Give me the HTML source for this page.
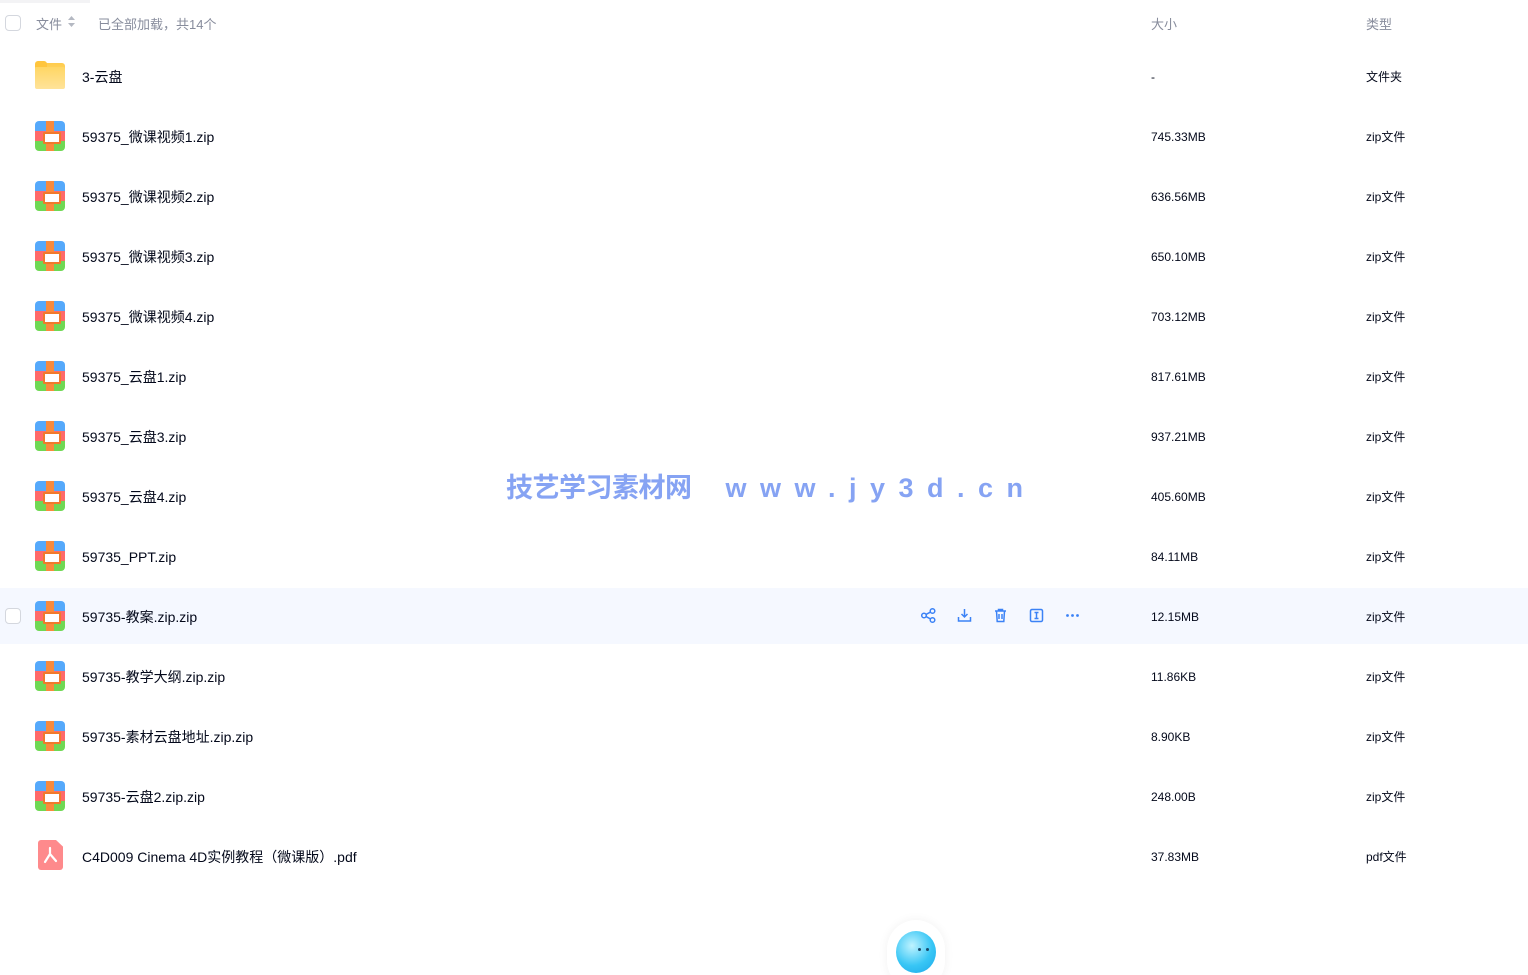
<!DOCTYPE html>
<html><head><meta charset="utf-8"><style>
*{margin:0;padding:0;box-sizing:border-box}
html,body{width:1528px;height:975px;overflow:hidden}
body{background:#fff;font-family:"Liberation Sans","Noto Sans CJK SC",sans-serif;position:relative;color:#03081a}
.hdr{position:absolute;top:0;left:0;width:1528px;height:46px;font-size:13px;color:#878c9c}
.cb{position:absolute;left:5px;width:16px;height:16px;border:1px solid #d4d7de;border-radius:4px;background:#fff}
.row{position:absolute;left:0;width:1528px;height:56px}
.row.hl{background:#f5f8ff}
.ic{position:absolute;left:35px;top:13px;width:30px;height:30px}
.nm{position:absolute;left:82px;top:1px;line-height:56px;font-size:14px}
.sz{position:absolute;left:1151px;top:1px;line-height:56px;font-size:12px}
.tp{position:absolute;left:1366px;top:1px;line-height:56px;font-size:12px}
.zip{border-radius:4px;overflow:hidden;background:linear-gradient(#55a9fb 0 33%,#ff6a6a 33% 66%,#6fd854 66%)}
.zip:before{content:"";position:absolute;left:11px;top:0;width:8px;height:30px;background:#f98a3c}
.zip:after{content:"";position:absolute;left:8px;top:11px;width:14px;height:8px;background:#fff;border:2px solid #f07a2c;border-radius:1px}
.acts{position:absolute;top:19px;left:920px}
.acts svg{position:absolute;top:0}
.wm{position:absolute;top:471px;left:506px;font-size:27px;font-weight:bold;color:#86a3f3;white-space:nowrap;line-height:34px}
</style></head><body>
<div style="position:absolute;left:0;top:0;width:90px;height:3px;background:#f3f3f5"></div>
<div class="hdr">
<div class="cb" style="top:15px"></div>
<span style="position:absolute;left:36px;top:14px">文件</span>
<svg style="position:absolute;left:68px;top:16px" width="7" height="11"><path d="M3.5 0L7 4H0z M3.5 11L7 7H0z" fill="#b4b8c2"/></svg>
<span style="position:absolute;left:98px;top:14px">已全部加载，共14个</span>
<span style="position:absolute;left:1151px;top:14px">大小</span>
<span style="position:absolute;left:1366px;top:14px">类型</span>
</div>

<div class="row" style="top:48px"><div class="ic" style="top:15px;height:26px;border-radius:3px;background:linear-gradient(#ffcc4d,#ffe08a 100%)"><div style="position:absolute;left:0;top:-2px;width:12px;height:6px;background:#ffc53d;border-radius:3px 3px 0 0"></div><div style="position:absolute;left:0;top:4px;width:30px;height:22px;background:linear-gradient(#ffd664,#ffe39a);border-radius:2px"></div></div><div class="nm">3-云盘</div><div class="sz">-</div><div class="tp">文件夹</div></div>

<div class="row" style="top:108px"><div class="ic zip"></div><div class="nm">59375_微课视频1.zip</div><div class="sz">745.33MB</div><div class="tp">zip文件</div></div>
<div class="row" style="top:168px"><div class="ic zip"></div><div class="nm">59375_微课视频2.zip</div><div class="sz">636.56MB</div><div class="tp">zip文件</div></div>
<div class="row" style="top:228px"><div class="ic zip"></div><div class="nm">59375_微课视频3.zip</div><div class="sz">650.10MB</div><div class="tp">zip文件</div></div>
<div class="row" style="top:288px"><div class="ic zip"></div><div class="nm">59375_微课视频4.zip</div><div class="sz">703.12MB</div><div class="tp">zip文件</div></div>
<div class="row" style="top:348px"><div class="ic zip"></div><div class="nm">59375_云盘1.zip</div><div class="sz">817.61MB</div><div class="tp">zip文件</div></div>
<div class="row" style="top:408px"><div class="ic zip"></div><div class="nm">59375_云盘3.zip</div><div class="sz">937.21MB</div><div class="tp">zip文件</div></div>
<div class="row" style="top:468px"><div class="ic zip"></div><div class="nm">59375_云盘4.zip</div><div class="sz">405.60MB</div><div class="tp">zip文件</div></div>
<div class="row" style="top:528px"><div class="ic zip"></div><div class="nm">59735_PPT.zip</div><div class="sz">84.11MB</div><div class="tp">zip文件</div></div>
<div class="row hl" style="top:588px"><div class="cb" style="top:20px"></div><div class="ic zip"></div><div class="nm">59735-教案.zip.zip</div>
<div class="acts">
<svg style="left:0" width="17" height="17" viewBox="0 0 17 17" fill="none" stroke="#3b82f6" stroke-width="1.5"><circle cx="4" cy="8.5" r="2.3"/><circle cx="12.5" cy="4" r="2.3"/><circle cx="12.5" cy="13" r="2.3"/><path d="M6 7.4l4.5-2.3M6 9.6l4.5 2.3"/></svg>
<svg style="left:36px" width="17" height="17" viewBox="0 0 17 17" fill="none" stroke="#3b82f6" stroke-width="1.5"><path d="M8.5 2v8M5.5 7l3 3 3-3M2.5 10v4h12v-4"/></svg>
<svg style="left:72px" width="17" height="17" viewBox="0 0 17 17" fill="none" stroke="#3b82f6" stroke-width="1.5"><path d="M3 4h11M6.5 4V2.5h4V4M4.5 4l.7 10.5h6.6L12.5 4M7 7v5M10 7v5"/></svg>
<svg style="left:108px" width="17" height="17" viewBox="0 0 17 17" fill="none" stroke="#3b82f6" stroke-width="1.5"><rect x="2.5" y="2.5" width="12" height="12" rx="1.5"/><path d="M6.5 5.5h4M6.5 11.5h4M8.5 5.5v6"/></svg>
<svg style="left:144px" width="17" height="17" viewBox="0 0 17 17" fill="#3b82f6"><circle cx="3.5" cy="8.5" r="1.4"/><circle cx="8.5" cy="8.5" r="1.4"/><circle cx="13.5" cy="8.5" r="1.4"/></svg>
</div>
<div class="sz">12.15MB</div><div class="tp">zip文件</div></div>
<div class="row" style="top:648px"><div class="ic zip"></div><div class="nm">59735-教学大纲.zip.zip</div><div class="sz">11.86KB</div><div class="tp">zip文件</div></div>
<div class="row" style="top:708px"><div class="ic zip"></div><div class="nm">59735-素材云盘地址.zip.zip</div><div class="sz">8.90KB</div><div class="tp">zip文件</div></div>
<div class="row" style="top:768px"><div class="ic zip"></div><div class="nm">59735-云盘2.zip.zip</div><div class="sz">248.00B</div><div class="tp">zip文件</div></div>
<div class="row" style="top:828px"><div class="ic" style="left:38px;top:12px;width:25px;height:30px;background:#fe8a8c;border-radius:3px;clip-path:polygon(0 0,72% 0,100% 22%,100% 100%,0 100%)"><svg width="25" height="30" viewBox="0 0 25 30" fill="none" stroke="#fff" stroke-width="2.2" stroke-linecap="round"><path d="M12 8v6M12 14l-5 8M12 14l6 7"/></svg></div><div class="nm">C4D009 Cinema 4D实例教程（微课版）.pdf</div><div class="sz">37.83MB</div><div class="tp">pdf文件</div></div>

<div class="wm"><span style="letter-spacing:-0.5px">技艺学习素材网</span><span style="margin-left:34px;letter-spacing:13.5px;font-family:'Liberation Sans',sans-serif">www.jy3d.cn</span></div>

<div style="position:absolute;left:887px;top:920px;width:58px;height:70px;border-radius:29px;background:#fff;box-shadow:0 0 10px rgba(0,0,0,0.06)"></div>
<div style="position:absolute;left:896px;top:931px;width:40px;height:42px;border-radius:50%;background:radial-gradient(circle at 40% 35%,#bff3ff,#38c6f5 55%,#1aa6e8)"></div>
<div style="position:absolute;left:918px;top:948px;width:3px;height:3px;background:#1a4a6a;border-radius:50%"></div>
<div style="position:absolute;left:926px;top:948px;width:3px;height:3px;background:#1a4a6a;border-radius:50%"></div>
</body></html>
